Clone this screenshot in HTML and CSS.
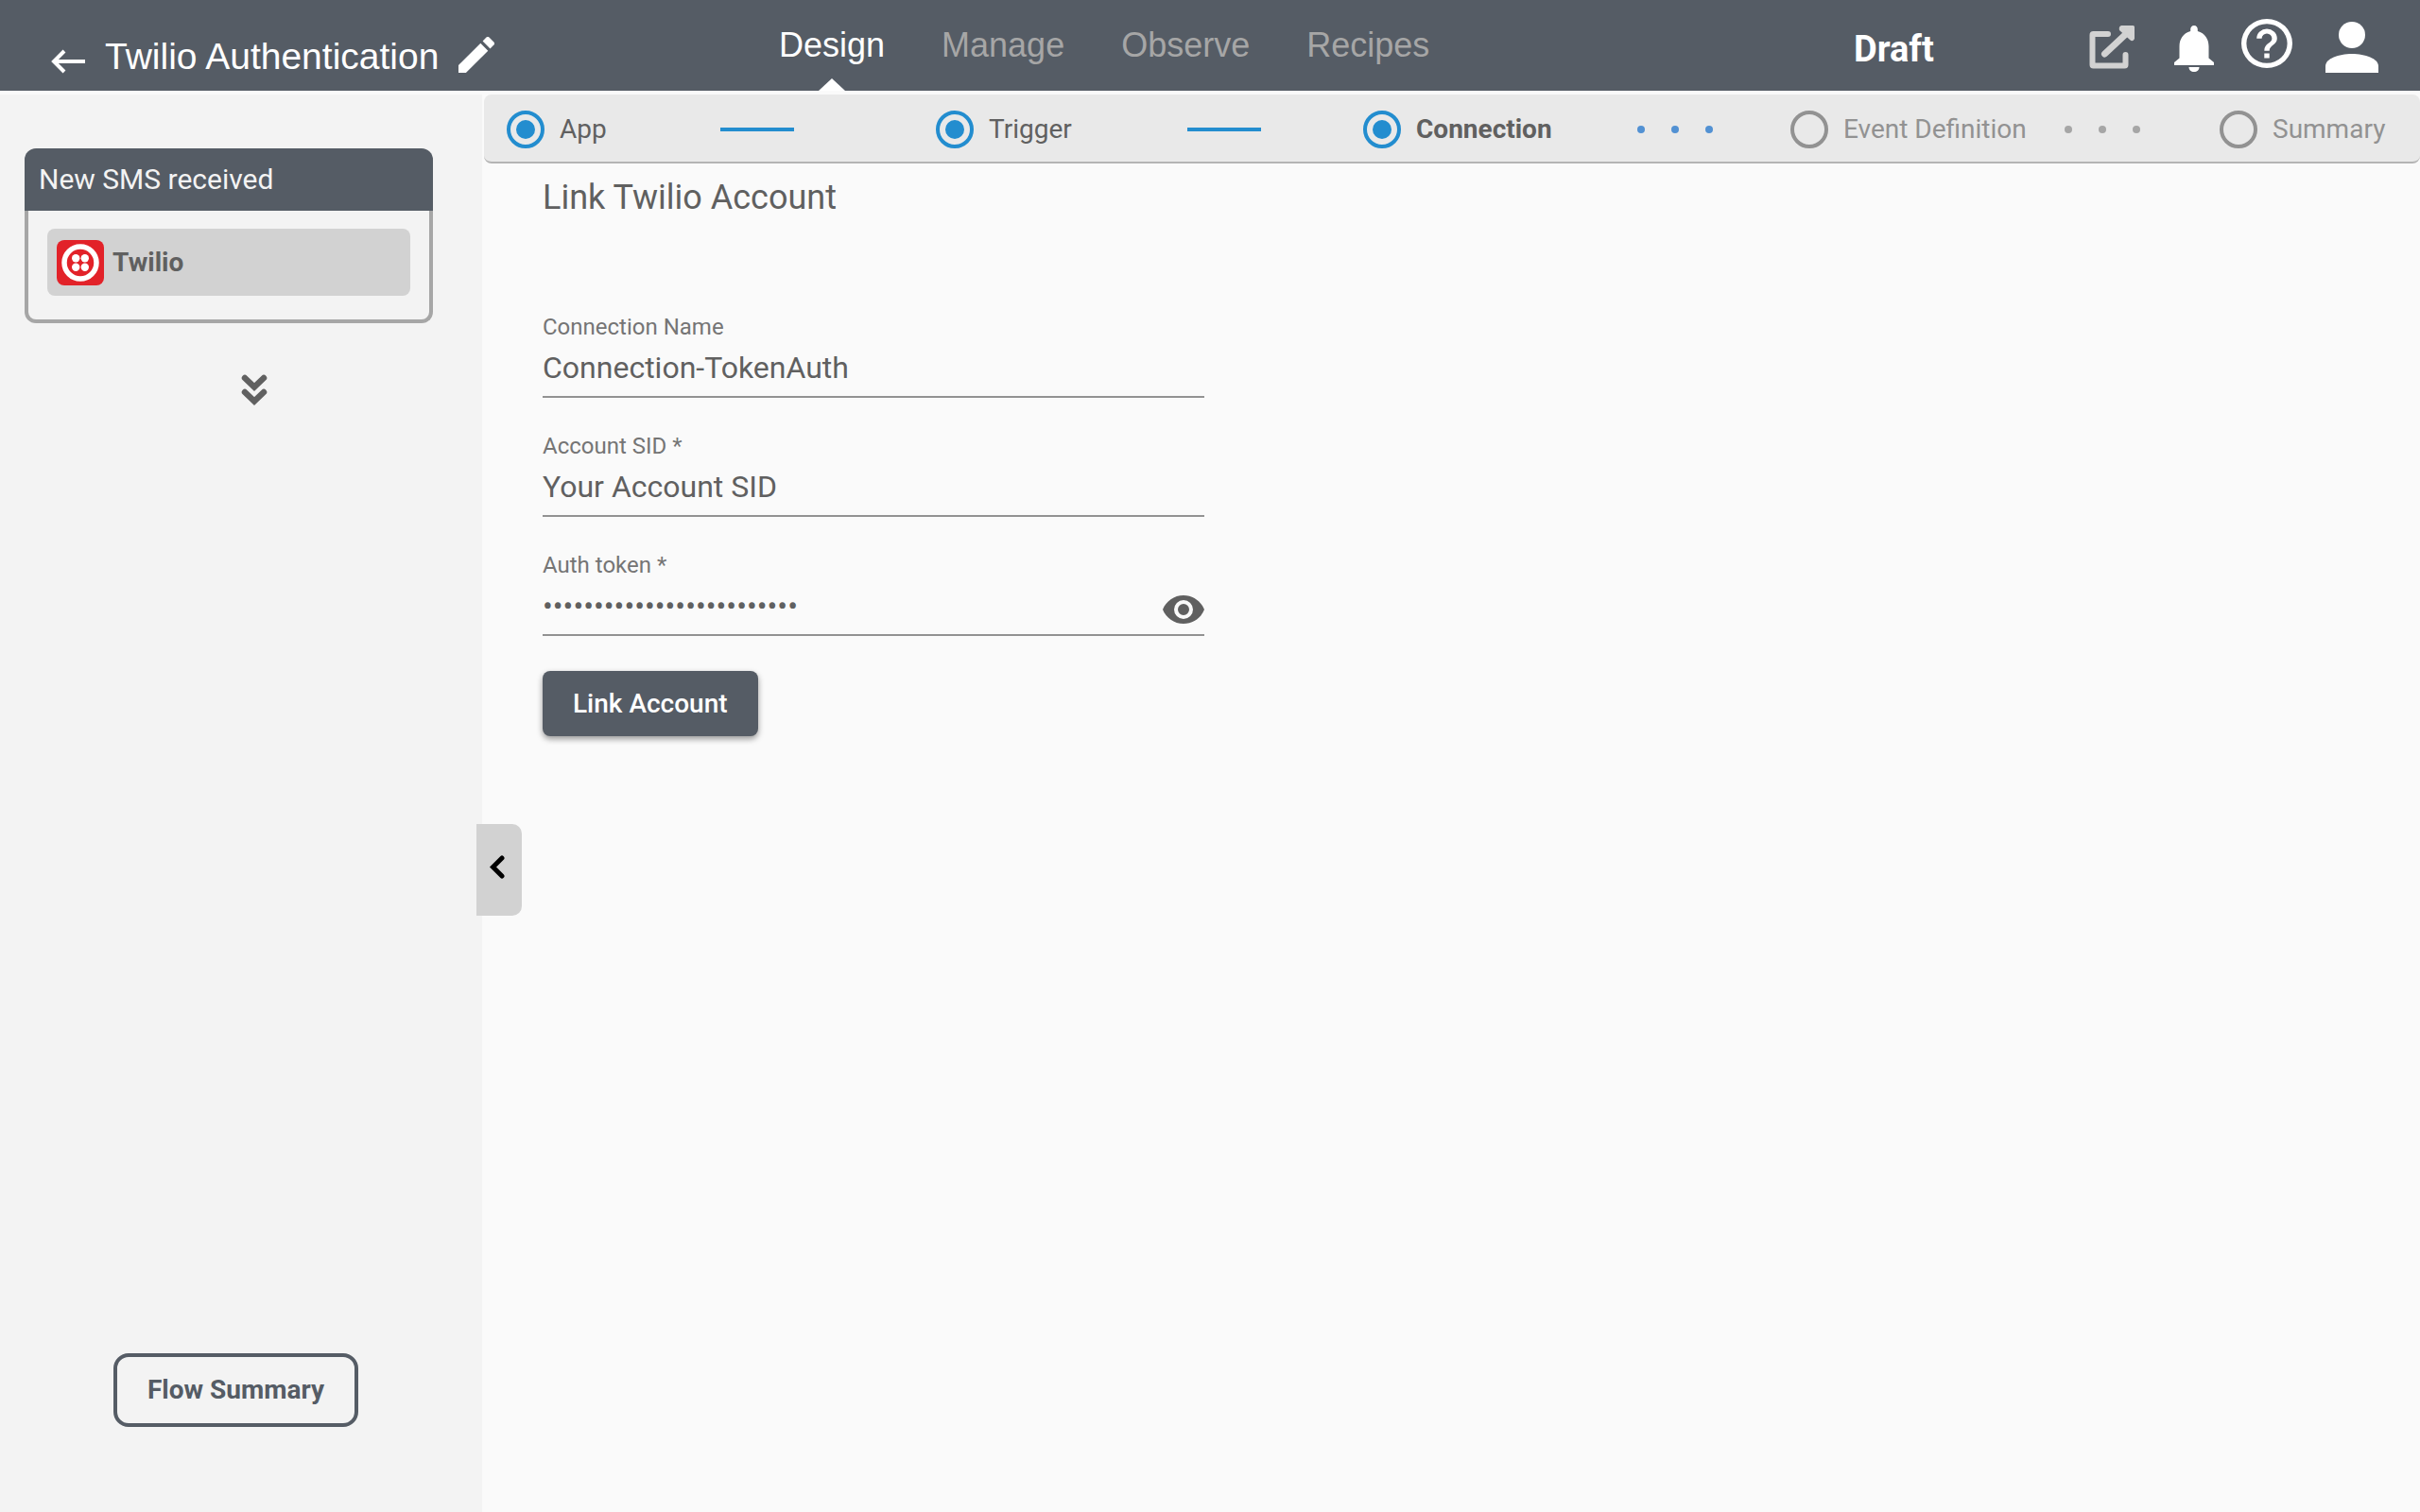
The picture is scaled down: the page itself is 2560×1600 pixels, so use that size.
FILE: index.html
```html
<!DOCTYPE html>
<html lang="en">
<head>
<meta charset="utf-8">
<title>Twilio Authentication</title>
<link rel="stylesheet" href="styles.css">
</head>
<body>
<header class="topbar">
  <div class="title-group">
    <button class="icon-button back" type="button" aria-label="Back">
      <svg width="36" height="26" viewBox="0 0 36 26"><path d="M36 13H4M14 2 3 13l11 11" fill="none" stroke="#fff" stroke-width="4"/></svg>
    </button>
    <h1 class="title">Twilio Authentication</h1>
    <button class="icon-button edit" type="button" aria-label="Edit name">
      <svg width="38" height="38" viewBox="3 3 18 18"><path fill="#fff" d="M3 17.25V21h3.75L17.81 9.94l-3.75-3.75L3 17.25zM20.71 7.04a1 1 0 0 0 0-1.41l-2.34-2.34a1 1 0 0 0-1.41 0l-1.83 1.83 3.75 3.75 1.83-1.83z"/></svg>
    </button>
  </div>
  <nav class="tabs">
    <a class="tab tab-active" href="#design">Design</a>
    <a class="tab" href="#manage">Manage</a>
    <a class="tab" href="#observe">Observe</a>
    <a class="tab" href="#recipes">Recipes</a>
  </nav>
  <div class="status-group">
    <span class="status">Draft</span>
    <div class="actions">
      <button class="icon-button open" type="button" aria-label="Open">
        <svg width="48" height="46" viewBox="0 0 48 46"><path d="M20 9H4.500a1 1 0 0 0-1 1v31.500a1 1 0 0 0 1 1h33a1 1 0 0 0 1-1V31" fill="none" stroke="#d2d2d2" stroke-width="6" stroke-linecap="round" stroke-linejoin="round"/><path d="M16.500 30 40 8" stroke="#d2d2d2" stroke-width="7" stroke-linecap="round"/><path d="M34 0h12.500q1.500 0 1.500 1.500V14q-2 4-5 1L32 5q-1-4 2-5z" fill="#d2d2d2"/></svg>
      </button>
      <button class="icon-button bell" type="button" aria-label="Notifications">
        <svg width="42" height="49" viewBox="0 0 42 49"><path fill="#fff" d="M21 0c-2.400 0-3.800 1.700-3.800 4v2C9.500 8 5.500 14.500 5.500 22v12.500L0 39v3h42v-3l-5.500-4.500V22c0-7.500-4-14-11.700-16V4c0-2.300-1.400-4-3.800-4zM15.500 44h11c0 3-2.400 5-5.500 5s-5.500-2-5.500-5z"/></svg>
      </button>
      <button class="icon-button help" type="button" aria-label="Help">
        <svg width="54" height="52" viewBox="2 2 20 20" preserveAspectRatio="none"><path fill="#fff" d="M11 18h2v-2h-2v2zm1-16a10 10 0 1 0 0 20 10 10 0 0 0 0-20zm0 18a8 8 0 1 1 0-16 8 8 0 0 1 0 16zm0-14a4 4 0 0 0-4 4h2a2 2 0 1 1 4 0c0 2-3 1.750-3 5h2c0-2.250 3-2.500 3-5a4 4 0 0 0-4-4z"/></svg>
      </button>
      <button class="icon-button person" type="button" aria-label="Account">
        <svg width="56" height="54" viewBox="0 0 56 54"><circle cx="28" cy="14" r="14" fill="#fff"/><path fill="#fff" d="M0 54V47C0 39 14 34 28 34s28 5 28 13v7z"/></svg>
      </button>
    </div>
  </div>
</header>

<div class="workspace">
  <aside class="sidebar">
    <section class="card">
      <h2 class="card-title">New SMS received</h2>
      <div class="card-body">
        <button class="app-item" type="button">
          <svg width="50" height="48" viewBox="0 0 50 48"><rect width="50" height="48" rx="8" fill="#e22229"/><circle cx="25" cy="24" r="17" fill="none" stroke="#fff" stroke-width="5.500"/><g fill="#fff"><circle cx="20.200" cy="19.200" r="4.200"/><circle cx="29.800" cy="19.200" r="4.200"/><circle cx="20.200" cy="28.800" r="4.200"/><circle cx="29.800" cy="28.800" r="4.200"/></g></svg>
          Twilio
        </button>
      </div>
    </section>
    <svg class="flow-arrow" width="28" height="34" viewBox="0 0 28 34"><path d="M4 4l10 9.500L24 4M4 19l10 9.500L24 19" fill="none" stroke="#606060" stroke-width="6.500" stroke-linecap="round"/></svg>
    <button class="flow-summary" type="button">Flow Summary</button>
  </aside>

  <main class="content">
    <ol class="stepper">
      <li class="step"><span class="dot dot-done"></span>App</li>
      <li class="line" aria-hidden="true"></li>
      <li class="step"><span class="dot dot-done"></span>Trigger</li>
      <li class="line" aria-hidden="true"></li>
      <li class="step step-current"><span class="dot dot-done"></span>Connection</li>
      <li class="dots" aria-hidden="true"><i></i><i></i><i></i></li>
      <li class="step step-next"><span class="dot"></span>Event Definition</li>
      <li class="dots dots-next" aria-hidden="true"><i></i><i></i><i></i></li>
      <li class="step step-next"><span class="dot"></span>Summary</li>
    </ol>
    <form class="form">
      <h2 class="form-title">Link Twilio Account</h2>
      <div class="fields">
        <div class="field">
          <label class="field-label" for="name">Connection Name</label>
          <input class="field-input" id="name" type="text" value="Connection-TokenAuth">
        </div>
        <div class="field">
          <label class="field-label" for="sid">Account SID *</label>
          <input class="field-input" id="sid" type="text" value="Your Account SID">
        </div>
        <div class="field">
          <label class="field-label" for="token">Auth token *</label>
          <div class="field-row">
            <input class="field-input" id="token" type="password" value="abcdefghijklmnopqrstuvwxy">
            <button class="icon-button reveal" type="button" aria-label="Show token">
              <svg width="44" height="30" viewBox="1 4.500 22 15"><path fill="#606060" d="M12 4.500C7 4.500 2.730 7.610 1 12c1.730 4.390 6 7.500 11 7.500s9.270-3.110 11-7.500c-1.730-4.390-6-7.500-11-7.500zM12 17a5 5 0 1 1 0-10 5 5 0 0 1 0 10zm0-8a3 3 0 1 0 0 6 3 3 0 0 0 0-6z"/></svg>
            </button>
          </div>
        </div>
        <button class="link-account" type="button">Link Account</button>
      </div>
    </form>
  </main>
  <button class="collapse" type="button" aria-label="Collapse sidebar">
    <svg width="16" height="26" viewBox="0 0 16 26"><path d="M13 3 3.500 12.500 13 22" fill="none" stroke="#000" stroke-width="5" stroke-linecap="round"/></svg>
  </button>
</div>
</body>
</html>
```

FILE: styles.css
```css
* { box-sizing: border-box; }

body {
  margin: 0;
  min-height: 100vh;
  display: flex;
  flex-direction: column;
  background: #fafafa;
  color: #606060;
  font-family: Roboto, sans-serif;
  font-size: 28px;
  line-height: 34px;
}

button { font: inherit; color: inherit; cursor: pointer; }
h1, h2 { margin: 0; font-weight: 400; }
svg { display: block; flex: none; }

.icon-button { padding: 0; border: 0; background: none; }

/* Top bar */
.topbar {
  display: grid;
  grid-template-columns: 824fr 1137fr 599fr;
  height: 96px;
  background: #555c65;
  color: #fff;
}
.title-group { display: flex; align-items: flex-start; padding-left: 54px; }
.title {
  margin: 36px 21px 0;
  font-family: "Liberation Sans", sans-serif;
  font-size: 39px;
  line-height: 48px;
  white-space: nowrap;
}
.back { margin-top: 52px; }
.edit { margin-top: 39px; }

.tabs {
  display: flex;
  gap: 60px;
  font-family: "Liberation Sans", sans-serif;
  font-size: 36px;
  line-height: 48px;
}
.tab { position: relative; padding-top: 24px; color: #a6a6a6; text-decoration: none; }
.tab-active { color: #fff; }
.tab-active::after {
  content: "";
  position: absolute;
  bottom: 0;
  left: 50%;
  margin-left: -14px;
  border: solid transparent;
  border-width: 0 14px 13px;
  border-bottom-color: #fff;
}

.status-group { display: flex; justify-content: space-between; padding-right: 44px; }
.status { padding-top: 28px; font-size: 38px; font-weight: 700; line-height: 48px; }
.actions { display: flex; align-items: flex-start; }
.open { margin: 27px 42px 0 0; }
.bell { margin: 27px 29px 0 0; }
.help { margin: 20px 35px 0 0; }
.person { margin-top: 23px; }

/* Workspace */
.workspace { position: relative; flex: 1; display: flex; margin-top: 4px; }

.sidebar {
  display: flex;
  flex-direction: column;
  align-items: flex-start;
  width: 510px;
  padding: 57px 52px 90px 26px;
  background: #f3f3f3;
}
.card { align-self: stretch; border-radius: 12px; }
.card-title {
  padding: 14px 15px;
  border-radius: 12px 12px 0 0;
  background: #555c65;
  color: #f3f3f3;
  font-size: 30px;
  line-height: 38px;
}
.card-body {
  padding: 19px 20px 25px;
  border: 4px solid #a6a6a6;
  border-top: 0;
  border-radius: 0 0 12px 12px;
}
.app-item {
  display: flex;
  align-items: center;
  gap: 9px;
  width: 100%;
  height: 71px;
  padding: 1px 10px 0;
  border: 0;
  border-radius: 8px;
  background: #d2d2d2;
  font-weight: 700;
}
.flow-arrow { margin: 54px 0 0 229px; }
.flow-summary {
  margin: auto 0 0 94px;
  padding: 18px 32px;
  border: 4px solid #555c65;
  border-radius: 16px;
  background: none;
  color: #555c65;
  font-weight: 700;
}

.content { flex: 1; min-width: 0; padding-left: 2px; }

/* Stepper */
.stepper {
  display: grid;
  grid-template-columns: 226fr 228fr 266fr 186fr 290fr 162fr 290fr 164fr 212fr;
  align-items: center;
  height: 73px;
  margin: 0;
  padding: 2px 0 0 24px;
  border-bottom: 2px solid #b4b4b4;
  border-radius: 8px;
  background: #e9e9e9;
  list-style: none;
}
.step { display: flex; align-items: center; gap: 16px; white-space: nowrap; }
.step-current { font-weight: 700; }
.step-next { color: #929292; }
.dot { flex: none; width: 40px; height: 40px; border: 4px solid #929292; border-radius: 50%; }
.dot-done { padding: 6px; border-color: #238dcf; }
.dot-done::before {
  content: "";
  display: block;
  height: 20px;
  border-radius: 50%;
  background: #238dcf;
}
.line { width: 78px; height: 4px; background: #238dcf; }
.dots { display: flex; gap: 28px; color: #5291d3; }
.dots i { width: 8px; height: 8px; border-radius: 50%; background: currentColor; }
.dots-next { color: #a6a6a6; }

/* Form */
.form { padding: 15px 62px; }
.form-title { font-size: 36px; line-height: 42px; }
.fields { display: grid; justify-items: start; gap: 37px; max-width: 700px; margin-top: 102px; }
.field { display: grid; gap: 10px; width: 100%; }
.field-label { color: #757575; font-size: 24px; line-height: 28px; }
.field-input {
  width: 100%;
  height: 51px;
  padding: 0 0 11px;
  border: 0;
  border-bottom: 2px solid #929292;
  outline: 0;
  background: none;
  color: inherit;
  font: 32px/38px Roboto, sans-serif;
}
.field-row { display: flex; border-bottom: 2px solid #929292; }
.field-row .field-input { flex: 1; min-width: 0; height: 49px; border: 0; }
.reveal { align-self: flex-start; margin-top: 8px; }
.link-account {
  padding: 18px 32px 17px;
  border: 0;
  border-radius: 8px;
  background: #555c65;
  box-shadow: 0 3px 6px rgba(0, 0, 0, 0.4);
  color: #fff;
  font-weight: 500;
}

/* Sidebar handle */
.collapse {
  position: absolute;
  top: 772px;
  left: 504px;
  display: flex;
  align-items: center;
  width: 48px;
  height: 97px;
  padding: 0 0 6px 14px;
  border: 0;
  border-radius: 0 10px 10px 0;
  background: #d2d2d2;
}
```
